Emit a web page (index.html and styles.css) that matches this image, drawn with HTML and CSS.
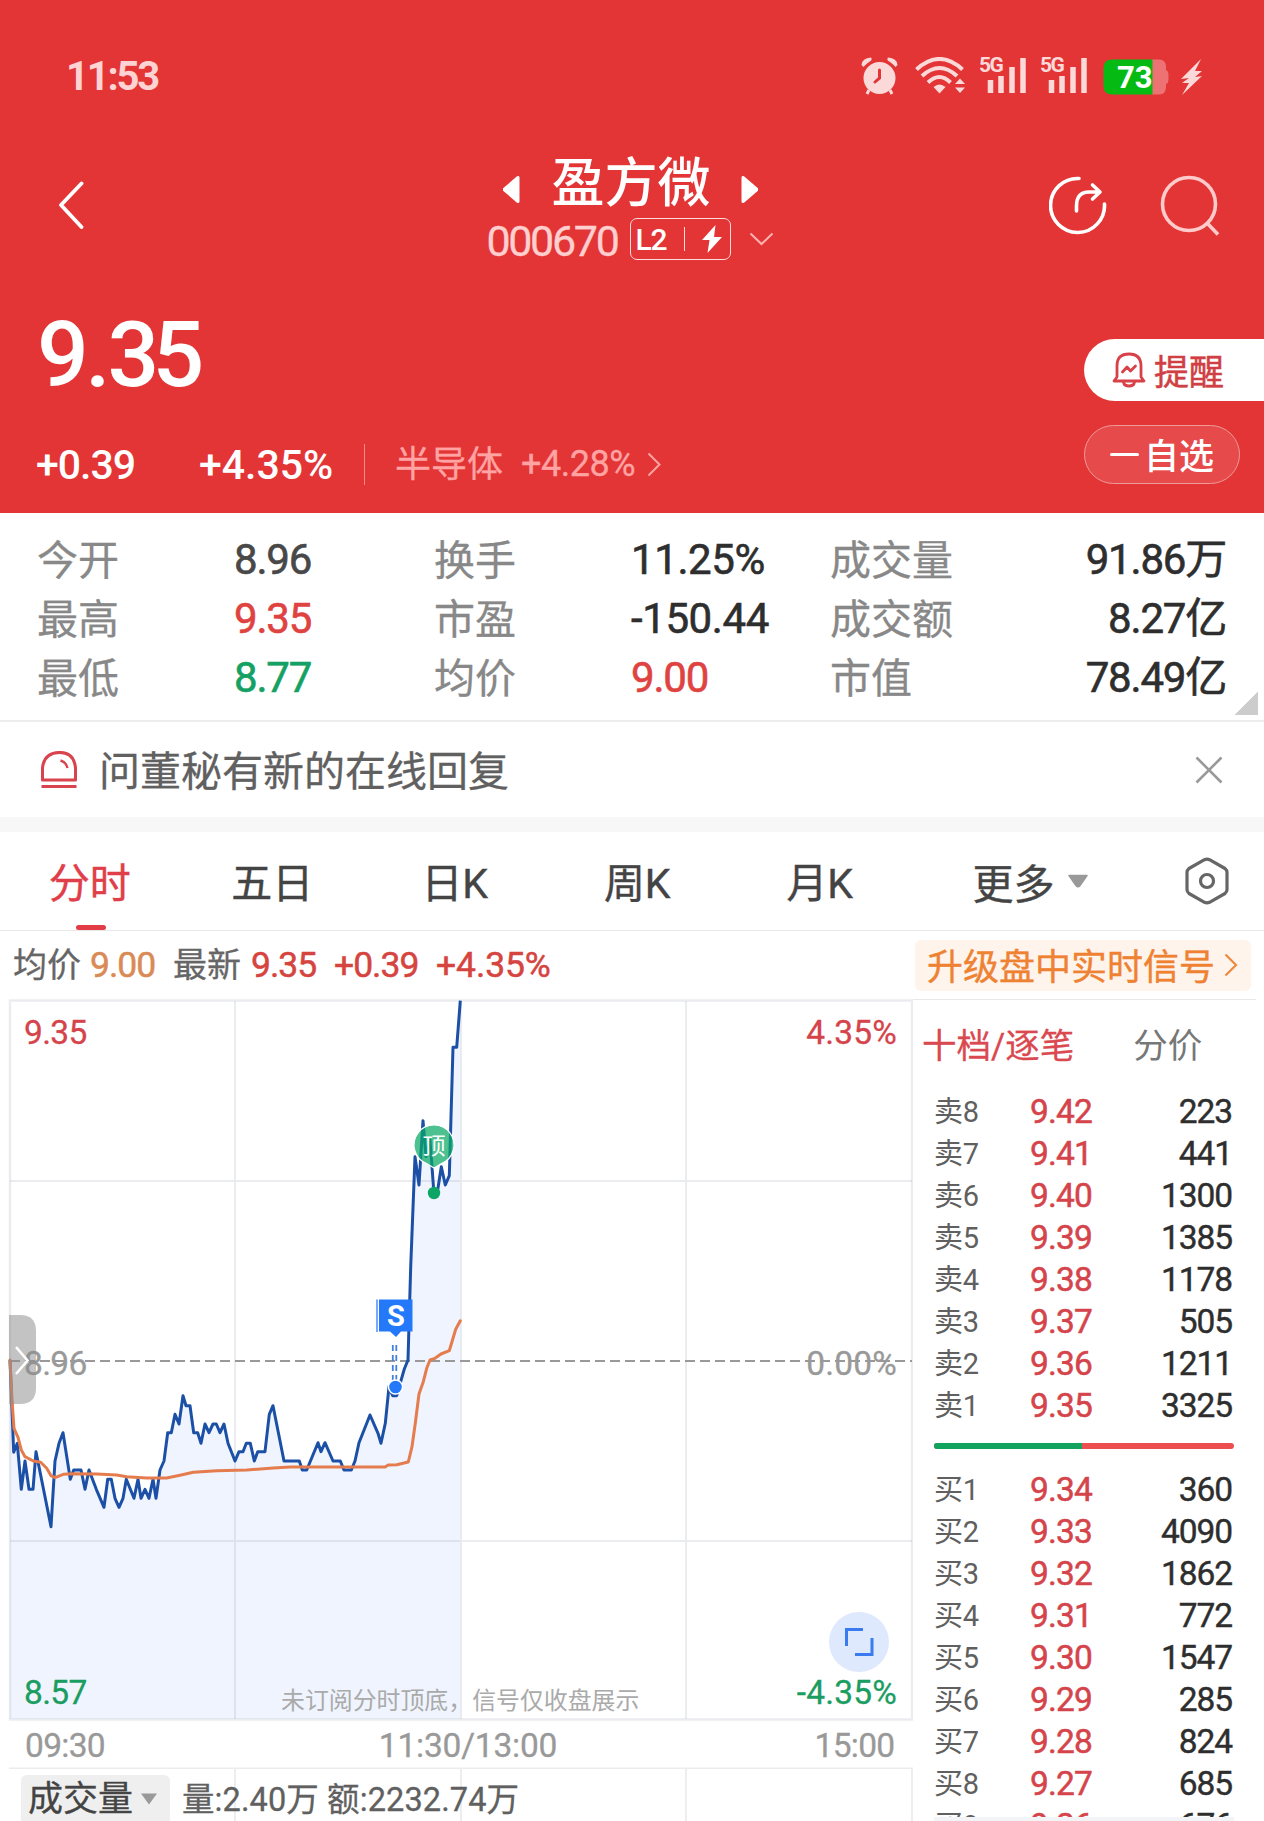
FILE: index.html
```html
<!DOCTYPE html>
<html lang="zh-CN">
<head>
  <meta charset="utf-8">
  <title>盈方微 000670</title>
  <link rel="stylesheet" href="styles.css">
</head>
<body>
  <div class="page">
    <header class="header">
      <div class="status-bar">
        <span class="clock">11:53</span>
        <div class="status-icons">
          <svg class="alarm" width="37" height="38" viewBox="0 0 37 38">
            <ellipse cx="18.500" cy="21" rx="16" ry="16" fill="#fbd9d9"/>
            <path d="M0.500 8Q1 1 10 .5Q12 3 8 5Q4 8 2.500 10ZM36.500 8Q36 1 27 .5Q25 3 29 5Q33 8 34.500 10Z" fill="#fbd9d9"/>
            <path d="M8 33L6 37M29 33L31 37" stroke="#fbd9d9" stroke-width="3"/>
            <path d="M18.500 13V21L14 25" fill="none" stroke="#e33536" stroke-width="3" stroke-linecap="round"/>
          </svg>
          <svg class="wifi" width="51" height="37" viewBox="0 0 51 37">
            <g fill="none" stroke="#fbd9d9" stroke-width="4">
              <path d="M1.500 12.500Q24.500 -8.500 47.500 12.500"/>
              <path d="M7 19Q24.500 3 42 19"/>
              <path d="M13 25.500Q24.500 14.500 35.500 25.500"/>
            </g>
            <path d="M18.500 30Q24.500 25 30.500 30L24.500 36.500Z" fill="#fbd9d9"/>
            <path d="M40 27L45 21.500L50 27ZM40 30.500L45 36L50 30.500Z" fill="#fbd9d9"/>
          </svg>
          <svg class="signal" width="49" height="43" viewBox="-2 -6 49 43">
            <text x="-1" y="15" class="net-label">5G</text>
            <path d="M10.500 36V23M21 36V19M32 36V10M43 36V1" stroke="#fbd9d9" stroke-width="5.500"/>
          </svg>
          <svg class="signal" width="49" height="43" viewBox="-2 -6 49 43">
            <text x="-1" y="15" class="net-label">5G</text>
            <path d="M10.500 36V23M21 36V19M32 36V10M43 36V1" stroke="#fbd9d9" stroke-width="5.500"/>
          </svg>
          <svg class="battery" width="66" height="36" viewBox="0 0 66 36">
            <path d="M49 .5H56Q63 .5 63 8V11Q65.500 12 65.500 15V21Q65.500 24 63 25V28Q63 35.500 56 35.500H49Z" fill="#ec7273"/>
            <path d="M9 .5H49.500V35.500H9Q.5 35.500 .5 27V9Q.5 .5 9 .5Z" fill="#05bb13"/>
            <text x="14" y="29" class="battery-label">73</text>
          </svg>
          <svg class="charge" width="22" height="37" viewBox="0 0 22 37">
            <path d="M20 0L0 20L8 19L1 24L8 24L1 36L21 17L14 18L21 12L14 12Z" fill="#fbd9d9"/>
          </svg>
        </div>
      </div>

      <div class="nav">
        <svg class="back" width="28" height="50" viewBox="0 0 28 50">
          <path d="M25.500 3.500L5 25L25.500 47" fill="none" stroke="#fff" stroke-width="3.800" stroke-linecap="round" stroke-linejoin="round"/>
        </svg>
        <div class="stock">
          <div class="stock-name">
            <svg width="18" height="27" viewBox="0 0 18 27"><path d="M1 13.500L15 1.500V25.500Z" fill="#fff" stroke="#fff" stroke-width="3" stroke-linejoin="round"/></svg>
            <h1>盈方微</h1>
            <svg width="18" height="27" viewBox="0 0 18 27"><path d="M17 13.500L3 1.500V25.500Z" fill="#fff" stroke="#fff" stroke-width="3" stroke-linejoin="round"/></svg>
          </div>
          <div class="stock-code">
            <span class="code">000670</span>
            <span class="level">
              <b>L2</b>
              <i></i>
              <svg width="20" height="28" viewBox="0 0 20 28"><path d="M13.500 0L0 15H7.500L5.500 28L20 12H12Z" fill="#fff"/></svg>
            </span>
            <svg width="25" height="14" viewBox="0 0 25 14"><path d="M1.500 1.500L12.500 12L23.500 1.500" fill="none" stroke="#ffb3b3" stroke-width="2"/></svg>
          </div>
        </div>
        <div class="nav-actions">
          <svg width="58" height="60" viewBox="0 0 58 60" fill="none" stroke="#fff" stroke-width="3.600" stroke-linecap="round" stroke-linejoin="round">
            <path d="M30 3.500A27 27 0 1 0 55.500 29"/>
            <path d="M27.500 36V31Q27.500 17 40 17H50M43.500 10L51 17L43.500 24"/>
          </svg>
          <svg width="60" height="62" viewBox="0 0 60 62" fill="none" stroke="#ffcaca" stroke-width="3.600">
            <circle cx="29" cy="29" r="26.500"/>
            <path d="M48 49L58 59.500"/>
          </svg>
        </div>
      </div>

      <div class="quote">
        <div class="quote-main">
          <div class="price">9<i>.</i>35</div>
          <div class="changes">
            <span class="change">+0.39</span>
            <span class="percent">+4.35%</span>
            <span class="sector">半导体</span>
            <span class="sector-percent">+4.28%</span>
            <svg width="14" height="25" viewBox="0 0 14 25"><path d="M1.500 1.500L12.500 12.500L1.500 23.500" fill="none" stroke="#ffa3a3" stroke-width="2"/></svg>
          </div>
        </div>
        <div class="quote-actions">
          <button class="remind">
            <svg width="34" height="36" viewBox="0 0 34 36" fill="none" stroke="#d94148" stroke-width="2.800" stroke-linejoin="round" stroke-linecap="round">
              <path d="M5 25V14Q5 2 17 2T29 14V25L32 29H2Z"/>
              <path d="M11.500 30Q12 34 17 34T22.500 30"/>
              <path d="M10.500 20L15 15L18.500 19L23.500 14"/>
            </svg>
            <span>提醒</span>
          </button>
          <button class="watch"><i></i><span>自选</span></button>
        </div>
      </div>
    </header>

    <section class="stats">
      <span>今开</span><b>8.96</b><span>换手</span><b class="dark">11.25%</b><span>成交量</span><b class="dark last">91.86万</b>
      <span>最高</span><b class="red">9.35</b><span>市盈</span><b class="dark">-150.44</b><span>成交额</span><b class="dark last">8.27亿</b>
      <span>最低</span><b class="green">8.77</b><span>均价</span><b class="red">9.00</b><span>市值</span><b class="dark last">78.49亿</b>
      <div class="corner"></div>
    </section>

    <section class="notice">
      <svg width="36" height="37" viewBox="0 0 36 37" fill="none" stroke="#d8434d" stroke-width="3">
        <path d="M1.500 29V17Q3 2 18 1.500T34.500 17V29Z" stroke-linejoin="round"/>
        <path d="M.5 35.500H35.500"/>
        <path d="M19.500 9.500Q25 11 26.500 17" stroke-width="2.500"/>
      </svg>
      <p>问董秘有新的在线回复</p>
      <svg width="28" height="28" viewBox="0 0 28 28"><path d="M1.500 1.500L26.500 26.500M26.500 1.500L1.500 26.500" stroke="#999" stroke-width="2.600"/></svg>
    </section>

    <nav class="tabs">
      <a class="tab active">分时</a>
      <a class="tab">五日</a>
      <a class="tab">日K</a>
      <a class="tab">周K</a>
      <a class="tab">月K</a>
      <a class="more">更多<svg width="22" height="14" viewBox="0 0 22 14"><path d="M2 1.500H20L13 11.500Q11 14 9 11.500Z" fill="#999" stroke="#999" stroke-linejoin="round" stroke-width="1.500"/></svg></a>
      <svg class="settings" width="44" height="48" viewBox="0 0 44 48" fill="none" stroke="#666" stroke-width="3.200" stroke-linejoin="round">
        <path d="M19.500 2.700Q22 1.500 24.500 2.700L40 11.500Q42 13 42 15.500V32.500Q42 35 40 36.500L24.500 45.300Q22 46.500 19.500 45.300L4 36.500Q2 35 2 32.500V15.500Q2 13 4 11.500Z"/>
        <circle cx="22" cy="24" r="6.500"/>
      </svg>
    </nav>

    <section class="info">
      <div class="info-values">
        <span>均价</span><b class="orange">9.00</b><span>最新</span><b>9.35</b><b>+0.39</b><b class="wide">+4.35%</b>
      </div>
      <a class="upgrade"><span>升级盘中实时信号</span><svg width="14" height="24" viewBox="0 0 14 24"><path d="M1.500 1.500L12 12L1.500 22.500" fill="none" stroke="#ee8a40" stroke-width="2.200"/></svg></a>
    </section>

    <main class="main">
      <div class="chart-col">
        <svg class="chart" width="913" height="770" viewBox="0 999 913 770">
          <!-- price area -->
          <path fill="#eff4fe" d="M10 1360L13.700 1452.300L17.300 1443.300L21.300 1489.300L25 1461L29 1489.300H33L36 1451.700L51 1526.700L55 1461L59 1443.300L63 1432.700L70.300 1479.300L73.700 1470H81L85 1489.300L89 1470L96.300 1489.300L104 1507.300L107.700 1479.300H111.300L115 1498.300L119 1507.300L123 1498.300L126.300 1479.300L134 1498.300L138 1479.300L141 1498.300L145 1489.300L149 1498.300L153 1479.300L156 1498.300L160 1470L164 1461L167.700 1432.700H171.300L175 1414.300L179 1424L183 1395.700L186 1405.700H190L193.700 1432.700H197.700L201 1443.300L205 1424L209 1432.700L213 1424H216.300L220 1432.700L224 1424L228 1443.300L235 1461L239 1451.700H243L246.300 1443.300H250.300L254.300 1461L257.700 1451.700H265L269.300 1414.300L273 1405.700L284 1461H299.300L302.300 1470H306.700L318 1442.700L321 1451.700L325 1442.700L333 1461H340.300L344 1470H351.300L355 1461L359 1442.700L370 1415L378 1433.300L381 1443.300L385.300 1423.300L389 1386.700L392.700 1395.700H396.700L400.700 1381.700L404.300 1369L408 1360L410.700 1266.700L415 1156.700L419 1185L423 1120.700L426 1156.700L430 1140L433.700 1190H437.700L441.300 1166.700L445.300 1185L449.300 1175.700L453 1047.300H456.700L460.300 1000.700V1719H10Z"/>
          <!-- grid -->
          <g fill="none" stroke="#5a6478" stroke-opacity=".12" stroke-width="2">
            <path d="M10 1000.500H912V1719.500H10Z" stroke-width="2.400"/>
            <path d="M235 1001V1719M461 1001V1719M686 1001V1719M10 1181H912M10 1541H912"/>
          </g>
          <path d="M9 1768.200H913" stroke="#ececec" stroke-width="1.600"/>
          <path d="M10 1361H912" stroke="#999" stroke-width="2" stroke-dasharray="10 5"/>
          <!-- price line -->
          <path fill="none" stroke="#1c50a6" stroke-width="3" stroke-linejoin="round" d="M10 1360L13.700 1452.300L17.300 1443.300L21.300 1489.300L25 1461L29 1489.300H33L36 1451.700L51 1526.700L55 1461L59 1443.300L63 1432.700L70.300 1479.300L73.700 1470H81L85 1489.300L89 1470L96.300 1489.300L104 1507.300L107.700 1479.300H111.300L115 1498.300L119 1507.300L123 1498.300L126.300 1479.300L134 1498.300L138 1479.300L141 1498.300L145 1489.300L149 1498.300L153 1479.300L156 1498.300L160 1470L164 1461L167.700 1432.700H171.300L175 1414.300L179 1424L183 1395.700L186 1405.700H190L193.700 1432.700H197.700L201 1443.300L205 1424L209 1432.700L213 1424H216.300L220 1432.700L224 1424L228 1443.300L235 1461L239 1451.700H243L246.300 1443.300H250.300L254.300 1461L257.700 1451.700H265L269.300 1414.300L273 1405.700L284 1461H299.300L302.300 1470H306.700L318 1442.700L321 1451.700L325 1442.700L333 1461H340.300L344 1470H351.300L355 1461L359 1442.700L370 1415L378 1433.300L381 1443.300L385.300 1423.300L389 1386.700L392.700 1395.700H396.700L400.700 1381.700L404.300 1369L408 1360L410.700 1266.700L415 1156.700L419 1185L423 1120.700L426 1156.700L430 1140L433.700 1190H437.700L441.300 1166.700L445.300 1185L449.300 1175.700L453 1047.300H456.700L460.300 1000.700"/>
          <!-- average line -->
          <path fill="none" stroke="#e57c4e" stroke-width="3" stroke-linejoin="round" stroke-linecap="round" d="M10 1360L12 1400L14 1428.300L18 1437.300L21.300 1450L25 1456.700L33.300 1461L40.700 1462.300L46.700 1468.300L51 1475.700L55 1477.700L63.300 1474.300L73.300 1473.700L96.700 1474L116.700 1475L126.700 1476.700L146.700 1478H166.700L180 1475.300L193.300 1472.300L216.700 1470.700L246.700 1470L273.300 1468L290 1467H385L388.300 1465L396.700 1464.700L408.300 1462L412 1446.700L415.300 1423.300L419 1394L423.300 1381.700L426.700 1368.300L430 1360L435 1358.300L441 1354L449.300 1350.700L455.700 1329.300L460.300 1320.700"/>
          <!-- top signal -->
          <path d="M434 1168L426.500 1163.500A20 20 0 1 1 441.500 1163.500Z" fill="#0aa966" fill-opacity=".72" stroke="#fff" stroke-width="1.200"/>
          <text x="434" y="1154" class="mark-top">顶</text>
          <circle cx="434" cy="1193" r="6.200" fill="#0ca565"/>
          <!-- sell signal -->
          <path d="M377 1299.500V1332" stroke="#4b8cf8" stroke-width="1.500"/>
          <path d="M379 1299.500H412.500V1331.500H401L396 1337L390 1331.500H379Z" fill="#2478fa"/>
          <text x="396" y="1326" class="mark-sell">S</text>
          <path d="M392.800 1345V1380M396.300 1345V1380" stroke="#4680dc" stroke-width="1.800" stroke-dasharray="6 4"/>
          <circle cx="395.500" cy="1387" r="7" fill="#2478fa" stroke="#fff" stroke-width="1.400"/>
          <!-- expand button -->
          <circle cx="859" cy="1642" r="30" fill="#dee9fd"/>
          <path d="M863 1629.500H846.500V1646M872 1638V1654.500H855" fill="none" stroke="#3a7cf0" stroke-width="3"/>
          <g class="axis">
            <text x="24" y="1044" class="up">9.35</text>
            <text x="897" y="1044" class="up end">4.35%</text>
            <text x="24" y="1375">8.96</text>
            <text x="897" y="1375" class="end">0.00%</text>
            <text x="24" y="1703.500" class="down">8.57</text>
            <text x="897" y="1703.500" class="down end">-4.35%</text>
            <text x="25" y="1757">09:30</text>
            <text x="468" y="1757" class="mid">11:30/13:00</text>
            <text x="894.500" y="1757" class="time-end">15:00</text>
          </g>
          <text x="281" y="1708.500" class="tip">未订阅分时顶底，信号仅收盘展示</text>
          <!-- drawer handle -->
          <path d="M9 1315H20Q36 1315 36 1331V1388Q36 1404 20 1404H9Z" fill="#8c8c8c" fill-opacity=".52"/>
          <path d="M16 1347L27.500 1360.500L16 1374" fill="none" stroke="#fff" stroke-width="2.600"/>
        </svg>
        <div class="volume">
          <span class="volume-type">成交量<svg width="16" height="12" viewBox="0 0 16 12"><path d="M0 .5H16L8 11.500Z" fill="#999"/></svg></span>
          <span class="volume-info">量:2.40万 额:2232.74万</span>
        </div>
      </div>

      <aside class="book">
        <div class="book-tabs"><span class="active">十档/逐笔</span><span>分价</span></div>
        <div class="row"><span>卖8</span><b>9.42</b><em>223</em></div>
        <div class="row"><span>卖7</span><b>9.41</b><em>441</em></div>
        <div class="row"><span>卖6</span><b>9.40</b><em>1300</em></div>
        <div class="row"><span>卖5</span><b>9.39</b><em>1385</em></div>
        <div class="row"><span>卖4</span><b>9.38</b><em>1178</em></div>
        <div class="row"><span>卖3</span><b>9.37</b><em>505</em></div>
        <div class="row"><span>卖2</span><b>9.36</b><em>1211</em></div>
        <div class="row"><span>卖1</span><b>9.35</b><em>3325</em></div>
        <div class="ratio"><i style="width: 49.4%"></i></div>
        <div class="row"><span>买1</span><b>9.34</b><em>360</em></div>
        <div class="row"><span>买2</span><b>9.33</b><em>4090</em></div>
        <div class="row"><span>买3</span><b>9.32</b><em>1862</em></div>
        <div class="row"><span>买4</span><b>9.31</b><em>772</em></div>
        <div class="row"><span>买5</span><b>9.30</b><em>1547</em></div>
        <div class="row"><span>买6</span><b>9.29</b><em>285</em></div>
        <div class="row"><span>买7</span><b>9.28</b><em>824</em></div>
        <div class="row"><span>买8</span><b>9.27</b><em>685</em></div>
        <div class="row"><span>买9</span><b>9.26</b><em>676</em></div>
        <div class="book-end"></div>
      </aside>
    </main>
  </div>
</body>
</html>
```
FILE: styles.css
```css
* {
  box-sizing: border-box;
}

body {
  margin: 0;
  font-family: Roboto, "Noto Sans CJK SC", sans-serif;
  color: #333;
  background: #fff;
}

b, i, em, h1 {
  font-style: normal;
  font-weight: 500;
}

svg {
  display: block;
  flex: none;
}

.page {
  width: 1264px;
  height: 1821px;
  overflow: hidden;
  display: flex;
  flex-direction: column;
}

/* header */
.header {
  height: 513px;
  flex: none;
  background: #e33536;
  color: #fff;
}

.status-bar {
  height: 140px;
  padding: 57px 61px 0 66px;
  display: flex;
  justify-content: space-between;
  align-items: flex-start;
}

.clock {
  font-size: 40px;
  line-height: 39px;
  font-weight: 700;
  letter-spacing: -2.2px;
  color: #ffd3d3;
}

.status-icons {
  display: flex;
}

.wifi { margin-left: 17px; }
.signal { margin: -6px 0 0 12px; }
.battery { margin: 2px 0 0 15px; }
.charge { margin: 2px 0 0 12px; }

.net-label {
  font-size: 21px;
  font-weight: 700;
  letter-spacing: -1.5px;
  fill: #fbd9d9;
}

.battery-label {
  font-size: 31px;
  font-weight: 700;
  fill: #fff;
}

.nav {
  height: 150px;
  padding: 0 44px 0 56px;
  display: flex;
  justify-content: space-between;
}

.back {
  margin-top: 40px;
}

.stock {
  padding: 11px 0 0 127px;
}

.stock-name {
  display: flex;
  justify-content: center;
  align-items: center;
  gap: 30px;
  height: 66px;
  padding-left: 2px;
}

.stock-name h1 {
  margin: 0;
  font-size: 53px;
  line-height: 66px;
}

.stock-name svg {
  margin-top: 11px;
}

.stock-code {
  display: flex;
  align-items: center;
  height: 44px;
}

.code {
  font-size: 43px;
  letter-spacing: -2.3px;
  line-height: 44px;
  padding-top: 3px;
  color: #ffcfcf;
  margin-right: 12px;
  -webkit-text-stroke: .3px currentColor;
}

.level {
  display: flex;
  align-items: center;
  width: 101px;
  height: 42px;
  padding: 0 8px 0 5px;
  border: 1.5px solid #ffdada;
  border-radius: 7px;
  justify-content: space-between;
  margin-right: 18px;
}

.level b {
  font-size: 30px;
  letter-spacing: -1.2px;
}

.level i {
  width: 1px;
  height: 24px;
  background: #ffdada;
}

.nav-actions {
  display: flex;
  gap: 53px;
  margin-top: 35px;
}

.quote {
  display: flex;
  justify-content: space-between;
}

.price {
  margin: 12px 0 0 37px;
  font-size: 91px;
  line-height: 106px;
  font-weight: 500;
  letter-spacing: -6.6px;
}

.price i {
  margin: 0 1px 0 3px;
  letter-spacing: -4px;
}

.changes {
  display: flex;
  align-items: center;
  margin: 35px 0 0 36px;
  height: 42px;
  font-size: 41px;
  font-weight: 500;
}

.change {
  width: 163px;
  line-height: 44px;
  padding-top: 2px;
  letter-spacing: -1px;
}

.percent {
  width: 166px;
  height: 41px;
  line-height: 43px;
  letter-spacing: 0;
  border-right: 1.5px solid #f18b8b;
}

.sector {
  margin-left: 30px;
  font-size: 36px;
  font-weight: 400;
  line-height: 42px;
  padding-top: 2px;
  color: #ffa3a3;
  -webkit-text-stroke: .3px currentColor;
}

.sector-percent {
  margin: 0 12px 0 18px;
  font-size: 36px;
  font-weight: 400;
  letter-spacing: -.5px;
  color: #ffa3a3;
  -webkit-text-stroke: .3px currentColor;
}

.quote-actions {
  width: 180px;
  padding-top: 49px;
}

.quote-actions button {
  display: flex;
  align-items: center;
  margin: 0;
  border: 0;
  font-family: inherit;
  font-size: 35px;
}

.quote-actions .remind {
  width: 180px;
  height: 62px;
  padding: 0 0 0 28px;
  gap: 8px;
  border-radius: 31px 0 0 31px;
  background: #fff;
  color: #d03f43;
  font-weight: 400;
  -webkit-text-stroke: .5px currentColor;
}

.quote-actions .watch {
  width: 156px;
  height: 59px;
  margin-top: 24px;
  padding: 0 0 0 25px;
  gap: 5px;
  border: 1.5px solid #f19a9a;
  border-radius: 30px;
  background: #e64a4b;
  color: #fff;
  font-weight: 500;
}

.quote-actions span {
  padding-bottom: 2px;
}

.watch i {
  width: 29px;
  height: 3px;
  border-radius: 2px;
  background: #fff;
}

/* today's figures */
.stats {
  position: relative;
  display: grid;
  grid-template-columns: 198px 199px 198px 198px 160px 1fr;
  grid-auto-rows: 59px;
  height: 209px;
  flex: none;
  padding: 17px 38px 0 36px;
  border-bottom: 2px solid #ececec;
  line-height: 59px;
}

.stats span {
  padding: 2px 0 0 1px;
  font-size: 41px;
  color: #888;
  -webkit-text-stroke: .3px currentColor;
}

.stats b {
  font-size: 42px;
  font-weight: 400;
  letter-spacing: -1.2px;
  color: #484848;
  -webkit-text-stroke: .6px currentColor;
}

.stats .dark {
  color: #2e2e2e;
  letter-spacing: -.4px;
}

.stats .red { color: #df4341; }
.stats .green { color: #14a163; }

.stats .last {
  text-align: right;
  letter-spacing: -1.2px;
}

.corner {
  position: absolute;
  right: 6px;
  bottom: 5px;
  width: 24px;
  height: 24px;
  background: linear-gradient(135deg, transparent 50%, #ccc 50%);
}

.notice {
  display: flex;
  align-items: center;
  height: 95px;
  flex: none;
  padding: 0 41px 0 41px;
}

.notice p {
  flex: 1;
  margin: 0 0 0 22px;
  padding-top: 5px;
  font-size: 41px;
  line-height: 60px;
  color: #606060;
  -webkit-text-stroke: .3px currentColor;
}

/* period tabs */
.tabs {
  display: flex;
  align-items: center;
  height: 114px;
  flex: none;
  border-top: 15px solid #f7f7f7;
  border-bottom: 1px solid #e8e8e8;
  font-size: 41px;
  color: #444;
  -webkit-text-stroke: .4px currentColor;
}

.tab {
  display: flex;
  align-items: center;
  justify-content: center;
  position: relative;
  width: 182.5px;
  height: 98px;
  padding: 0 3px 2px 0;
}

.tab.active {
  color: #e03e49;
}

.tab.active::after {
  content: "";
  position: absolute;
  left: 76px;
  bottom: 0;
  width: 30px;
  height: 5px;
  border-radius: 3px;
  background: #e23c47;
}

.more {
  display: flex;
  align-items: center;
  gap: 12px;
  margin-left: 60px;
  padding-bottom: 1px;
  flex: 1;
}

.settings {
  margin-right: 35px;
}

.info {
  display: flex;
  align-items: center;
  justify-content: space-between;
  height: 68px;
  flex: none;
  padding: 0 12px 0 13px;
}

.info-values {
  display: grid;
  grid-template-columns: 77px 83px 78px 83px 102px auto;
  align-items: center;
  font-size: 34px;
  line-height: 50px;
  color: #666;
  -webkit-text-stroke: .3px currentColor;
}

.info-values b {
  font-size: 35.5px;
  font-weight: 400;
  letter-spacing: -1px;
  color: #d6443f;
  -webkit-text-stroke: .5px currentColor;
}

.info-values .orange {
  color: #d98a55;
}

.info-values .wide {
  letter-spacing: -.1px;
}

.upgrade {
  display: flex;
  align-items: center;
  gap: 9px;
  width: 336px;
  height: 51px;
  margin-right: 1px;
  padding-left: 12px;
  border-radius: 6px;
  background: #fff4ec;
  color: #ee8232;
  font-size: 36px;
  -webkit-text-stroke: .4px currentColor;
}

.upgrade span {
  padding-bottom: 3px;
}

.main {
  display: flex;
  height: 822px;
}

.chart-col {
  width: 913px;
}

.axis {
  font-size: 33.5px;
  fill: #999;
  letter-spacing: -.7px;
  stroke: #999;
  stroke-width: .3px;
}

.axis .up { fill: #d5434b; stroke: #d5434b; }
.axis .down { fill: #1b9d61; stroke: #1b9d61; }

.axis .end {
  text-anchor: end;
  letter-spacing: .2px;
}

.axis .mid {
  text-anchor: middle;
  letter-spacing: -.2px;
}

.axis .time-end {
  text-anchor: end;
}

.tip {
  font-size: 23.9px;
  fill: #aaa;
}

.mark-top {
  font-size: 23px;
  fill: #fff;
  text-anchor: middle;
}

.mark-sell {
  font-size: 29px;
  font-weight: 700;
  fill: #fff;
  text-anchor: middle;
}

.volume {
  display: flex;
  height: 52px;
  margin-left: 9px;
  padding: 6px 0 0 12px;
  background:
    linear-gradient(#eee, #eee) 225px 0 / 2px 100% no-repeat,
    linear-gradient(#eee, #eee) 451px 0 / 2px 100% no-repeat,
    linear-gradient(#eee, #eee) 676px 0 / 2px 100% no-repeat,
    linear-gradient(#eee, #eee) 902px 0 / 2px 100% no-repeat;
}

.volume-type {
  display: flex;
  align-items: center;
  gap: 8px;
  width: 149px;
  height: 46px;
  padding: 3px 0 0 7px;
  border-radius: 6px 6px 0 0;
  background: #efefef;
  color: #444;
  font-size: 35px;
  line-height: 38px;
  -webkit-text-stroke: .3px currentColor;
}

.volume-type svg {
  margin-top: -2px;
}

.volume-info {
  margin-left: 12px;
  padding-top: 4px;
  font-size: 32.5px;
  line-height: 42px;
  letter-spacing: .1px;
  color: #606060;
  -webkit-text-stroke: .3px currentColor;
}

/* order book */
.book {
  position: relative;
  flex: 1;
  padding: 0 32px 0 21px;
}

.book::before {
  content: "";
  display: block;
  height: 1px;
  margin: 0 -24px 0 -21px;
  background: #e8e8e8;
}

.book-tabs {
  display: flex;
  gap: 59px;
  height: 91px;
  margin-left: -12px;
  font-size: 34.5px;
  line-height: 93px;
  color: #777;
}

.book-tabs .active {
  color: #da4850;
  -webkit-text-stroke: .3px currentColor;
}

.row {
  display: grid;
  grid-template-columns: 96px 100px 1fr;
  height: 42px;
  line-height: 42px;
  font-size: 33.5px;
  letter-spacing: -.8px;
}

.row span {
  font-size: 29px;
  letter-spacing: -.3px;
  color: #606060;
}

.row b {
  font-weight: 400;
  color: #d5444b;
  -webkit-text-stroke: .5px currentColor;
}

.row em {
  text-align: right;
  font-weight: 400;
  letter-spacing: -1.1px;
  color: #2e2e2e;
  -webkit-text-stroke: .4px currentColor;
}

.ratio {
  height: 6px;
  margin: 16px -2px 20px 0;
  border-radius: 3px;
  background: #ec4f50;
  overflow: hidden;
}

.ratio i {
  display: block;
  height: 6px;
  background: #12a35e;
}

.book-end {
  position: absolute;
  left: 21px;
  right: 30px;
  top: 818px;
  height: 4px;
  background: #f3f4f8;
}
```
